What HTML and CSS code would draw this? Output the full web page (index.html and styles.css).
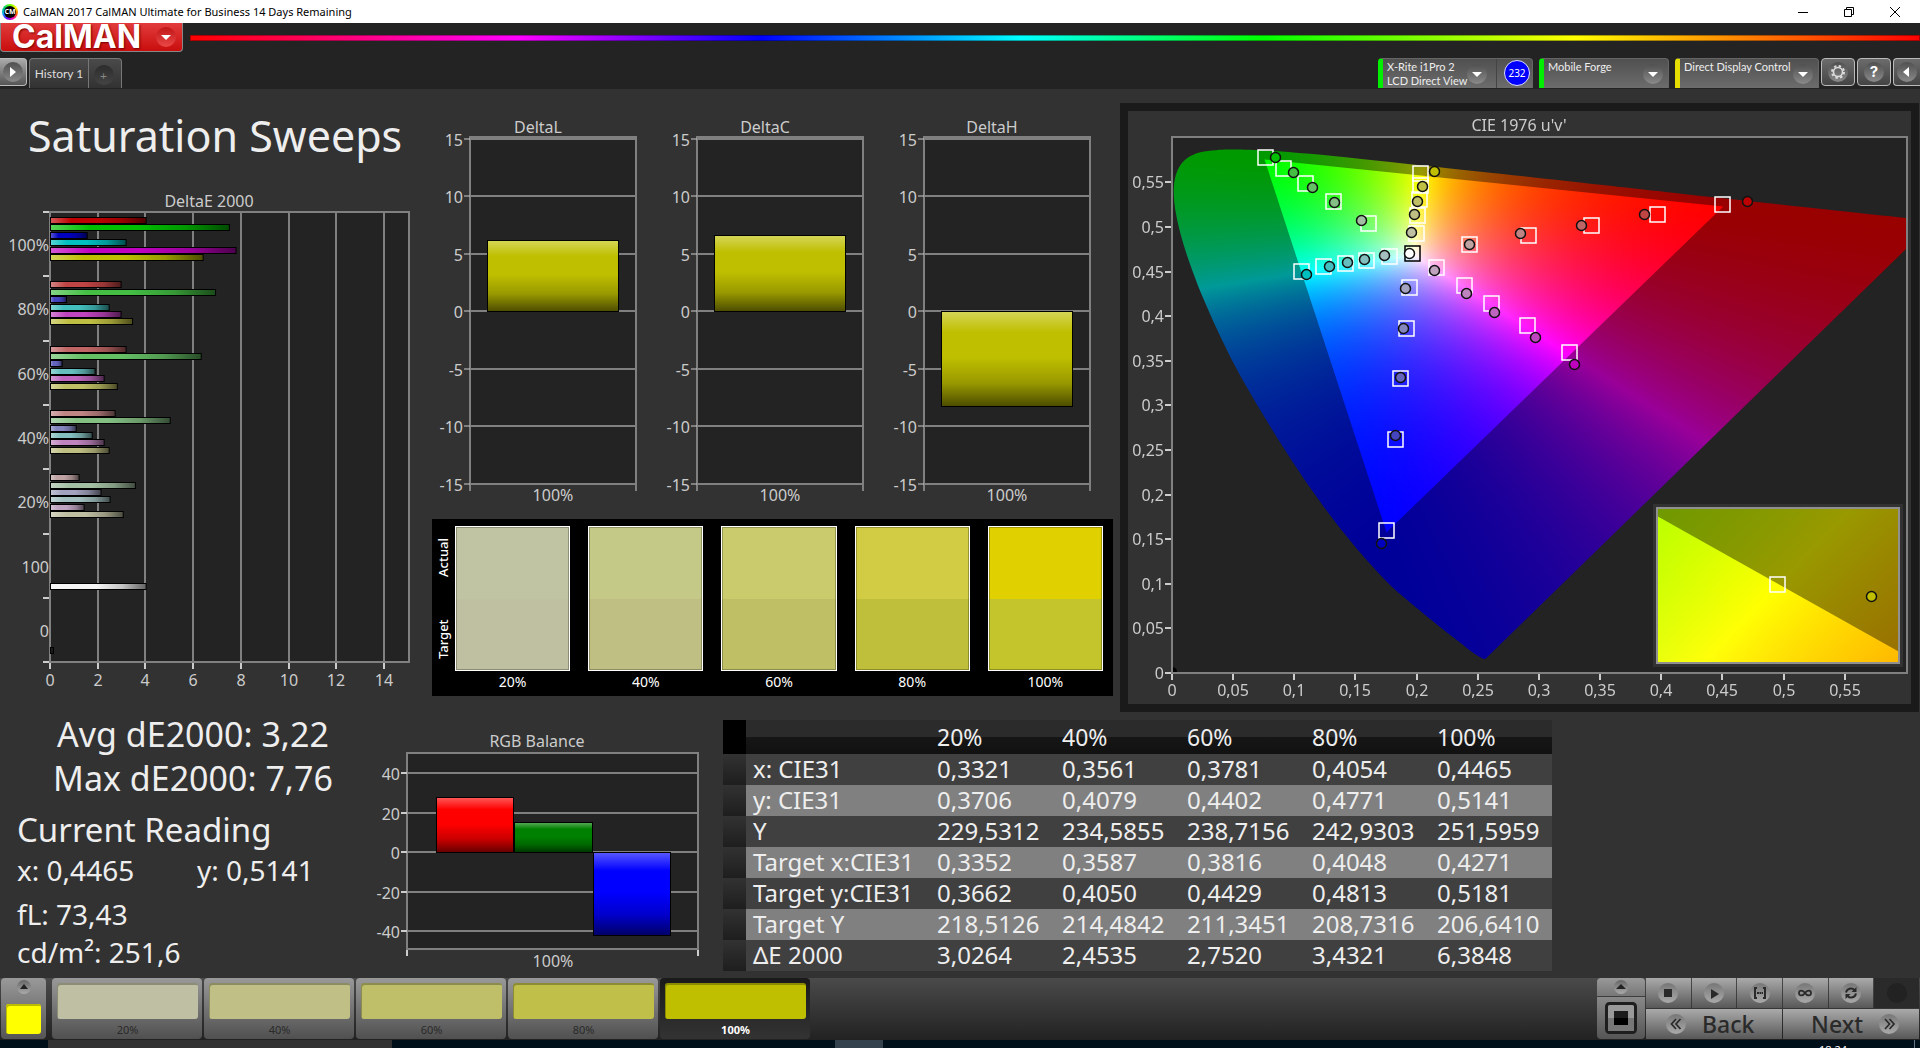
FILE: index.html
```html
<!DOCTYPE html>
<html lang="en">
<head>
<meta charset="utf-8">
<title>CalMAN 2017</title>
<link rel="stylesheet" href="styles.css">
</head>
<body>
<div class="titlebar">
  <span class="app-icon">CM</span>
  <span class="app-title">CalMAN 2017 CalMAN Ultimate for Business 14 Days Remaining</span>
  <div class="window-controls">
    <button aria-label="Minimize"><svg width="12" height="12" viewBox="0 0 12 12"><path d="M1 6.5H11" /></svg></button>
    <button aria-label="Restore"><svg width="12" height="12" viewBox="0 0 12 12"><path d="M1.5 3.5H8.500V10.500H1.500ZM3.500 3.500V1.500H10.500V8.500H8.500" /></svg></button>
    <button aria-label="Close"><svg width="12" height="12" viewBox="0 0 12 12"><path d="M1 1L11 11M11 1L1 11" /></svg></button>
  </div>
</div>

<header class="header">
  <div class="brand-row">
    <button class="logo">CalMAN<span class="knob knob-red"><svg width="20" height="20" viewBox="0 0 20 20"><path d="M5 8H15L10 13Z" fill="#fff"/></svg></span></button>
    <div class="rainbow"></div>
  </div>
  <div class="tab-row">
    <button class="square-button edge-left" aria-label="Open panel"><span class="knob"><svg width="20" height="20" viewBox="0 0 20 20"><path d="M7 5L13 10L7 15Z" fill="#fff"/></svg></span></button>
    <div class="tabs">
      <button class="tab">History 1</button>
      <button class="tab tab-add" aria-label="Add tab"><span class="knob knob-dark">+</span></button>
    </div>
    <div class="devices">
      <div class="device device-meter">
        <button class="device-name">X-Rite i1Pro 2<br>LCD Direct View<span class="knob"><svg width="20" height="20" viewBox="0 0 20 20"><path d="M5 8H15L10 13Z" fill="#fff"/></svg></span></button>
        <span class="badge">232</span>
      </div>
      <div class="device device-source">
        <button class="device-name">Mobile Forge<span class="knob"><svg width="20" height="20" viewBox="0 0 20 20"><path d="M5 8H15L10 13Z" fill="#fff"/></svg></span></button>
      </div>
      <div class="device device-display">
        <button class="device-name">Direct Display Control<span class="knob"><svg width="20" height="20" viewBox="0 0 20 20"><path d="M5 8H15L10 13Z" fill="#fff"/></svg></span></button>
      </div>
      <button class="square-button" aria-label="Settings"><span class="knob"><svg width="20" height="20" viewBox="0 0 20 20"><circle cx="10" cy="10" r="4.500" fill="none" stroke="#ddd" stroke-width="1.600"/><circle cx="10" cy="10" r="6" fill="none" stroke="#ddd" stroke-width="2" stroke-dasharray="2.400 2.312"/></svg></span></button>
      <button class="square-button" aria-label="Help"><span class="knob knob-help">?</span></button>
      <button class="square-button edge-right" aria-label="Collapse"><span class="knob"><svg width="20" height="20" viewBox="0 0 20 20"><path d="M12 5L6 10L12 15Z" fill="#fff"/></svg></span></button>
    </div>
  </div>
</header>

<main class="workspace">
  <section class="top">
    <div class="sweeps">
      <h1>Saturation Sweeps</h1>
      <svg id="delta-e" class="chart" viewBox="0 0 432 505" role="img" aria-label="DeltaE 2000"></svg>
    </div>
    <div class="middle">
      <div class="deltas">
        <svg id="delta-l" class="chart" viewBox="0 0 227 400" role="img" aria-label="DeltaL"></svg>
        <svg id="delta-c" class="chart" viewBox="0 0 227 400" role="img" aria-label="DeltaC"></svg>
        <svg id="delta-h" class="chart" viewBox="0 0 227 400" role="img" aria-label="DeltaH"></svg>
      </div>
      <div class="swatches">
        <div class="swatch-sides"><span>Actual</span><span>Target</span></div>
        <div class="swatch-list">
          <figure class="swatch s20"><div class="pair"><i></i><i></i></div><figcaption>20%</figcaption></figure>
          <figure class="swatch s40"><div class="pair"><i></i><i></i></div><figcaption>40%</figcaption></figure>
          <figure class="swatch s60"><div class="pair"><i></i><i></i></div><figcaption>60%</figcaption></figure>
          <figure class="swatch s80"><div class="pair"><i></i><i></i></div><figcaption>80%</figcaption></figure>
          <figure class="swatch s100"><div class="pair"><i></i><i></i></div><figcaption>100%</figcaption></figure>
        </div>
      </div>
    </div>
    <div class="cie">
      <canvas id="gamut" width="783" height="593"></canvas>
      <svg id="cie" class="chart" viewBox="0 0 783 593" role="img" aria-label="CIE 1976 u'v'"></svg>
    </div>
  </section>

  <section class="bottom">
    <div class="readings">
      <p class="summary">Avg dE2000: 3,22</p>
      <p class="summary">Max dE2000: 7,76</p>
      <h2>Current Reading</h2>
      <div class="xy"><span>x: 0,4465</span><span>y: 0,5141</span></div>
      <p class="fl">fL: 73,43</p>
      <p class="cd">cd/m²: 251,6</p>
    </div>
    <svg id="rgb" class="chart" viewBox="0 0 337 266" role="img" aria-label="RGB Balance"></svg>
    <table class="data">
      <colgroup><col class="c-head"><col class="c-label"><col class="c-val"><col class="c-val"><col class="c-val"><col class="c-val"><col class="c-last"></colgroup>
      <thead><tr><td></td><th></th><th>20%</th><th>40%</th><th>60%</th><th>80%</th><th>100%</th></tr></thead>
      <tbody>
        <tr><td></td><th>x: CIE31</th><td>0,3321</td><td>0,3561</td><td>0,3781</td><td>0,4054</td><td>0,4465</td></tr>
        <tr><td></td><th>y: CIE31</th><td>0,3706</td><td>0,4079</td><td>0,4402</td><td>0,4771</td><td>0,5141</td></tr>
        <tr><td></td><th>Y</th><td>229,5312</td><td>234,5855</td><td>238,7156</td><td>242,9303</td><td>251,5959</td></tr>
        <tr><td></td><th>Target x:CIE31</th><td>0,3352</td><td>0,3587</td><td>0,3816</td><td>0,4048</td><td>0,4271</td></tr>
        <tr><td></td><th>Target y:CIE31</th><td>0,3662</td><td>0,4050</td><td>0,4429</td><td>0,4813</td><td>0,5181</td></tr>
        <tr><td></td><th>Target Y</th><td>218,5126</td><td>214,4842</td><td>211,3451</td><td>208,7316</td><td>206,6410</td></tr>
        <tr><td></td><th>ΔE 2000</th><td>3,0264</td><td>2,4535</td><td>2,7520</td><td>3,4321</td><td>6,3848</td></tr>
      </tbody>
    </table>
  </section>
</main>

<footer class="controls">
  <button class="current" aria-label="Current colour"><span class="mini-knob"><svg width="14" height="14" viewBox="0 0 14 14"><path d="M3 9L7 4L11 9Z" fill="#222"/></svg></span><i></i></button>
  <div class="steps">
    <button class="step s20"><i></i>20%</button>
    <button class="step s40"><i></i>40%</button>
    <button class="step s60"><i></i>60%</button>
    <button class="step s80"><i></i>80%</button>
    <button class="step s100 active"><i></i>100%</button>
  </div>
  <div class="pattern">
    <button class="pattern-up" aria-label="More patterns"><span class="mini-knob"><svg width="14" height="14" viewBox="0 0 14 14"><path d="M2 9L7 4L12 9Z" fill="#222"/></svg></span></button>
    <button class="pattern-window" aria-label="Window pattern"><svg width="32" height="32" viewBox="0 0 32 32"><rect x="1.500" y="1.500" width="29" height="29" rx="3" fill="#999" stroke="#1e1e1e" stroke-width="3"/><rect x="3" y="16" width="26" height="13" fill="#777"/><rect x="9" y="9" width="14" height="14" fill="#000"/><rect x="9" y="9" width="14" height="7" fill="#1c1c1c"/></svg></button>
  </div>
  <div class="transport">
    <button aria-label="Stop"><span class="knob"><svg width="20" height="20" viewBox="0 0 20 20"><path d="M6 6H14V14H6Z" fill="#2a2a2a"/></svg></span></button>
    <button aria-label="Play"><span class="knob"><svg width="20" height="20" viewBox="0 0 20 20"><path d="M7 6L15 11L7 16Z" fill="#2a2a2a"/></svg></span></button>
    <button aria-label="Read series"><span class="knob"><svg width="20" height="20" viewBox="0 0 20 20"><path d="M7 5H5V15H7M13 5H15V15H13" fill="none" stroke="#2a2a2a" stroke-width="2"/><path d="M7 9H9V11H7ZM9.500 9H11V11H9.500ZM11.500 9H13V11H11.500Z" fill="#2a2a2a"/></svg></span></button>
    <button aria-label="Continuous"><span class="knob"><svg width="20" height="20" viewBox="0 0 20 20"><path d="M10 10C8 7 4 6.500 4 10S8 13 10 10S16 6.500 16 10S12 13 10 10Z" fill="none" stroke="#2a2a2a" stroke-width="1.800"/></svg></span></button>
    <button aria-label="Refresh"><span class="knob"><svg width="20" height="20" viewBox="0 0 20 20"><path d="M5 9.500A5 5 0 0 1 13.500 7M15 10.500A5 5 0 0 1 6.500 13" fill="none" stroke="#2a2a2a" stroke-width="2"/><path d="M15.500 4V9H10.500ZM4.500 16V11H9.500Z" fill="#2a2a2a"/></svg></span></button>
    <button class="off" aria-label="Idle"><span class="knob knob-dark"></span></button>
    <button class="wide back"><span class="knob"><svg width="20" height="20" viewBox="0 0 20 20"><path d="M10 5L5.500 10L10 15M14.500 5L10 10L14.500 15" fill="none" stroke="#2a2a2a" stroke-width="1.700"/></svg></span>Back</button>
    <button class="wide next">Next<span class="knob"><svg width="20" height="20" viewBox="0 0 20 20"><path d="M6 5L10.500 10L6 15M10.500 5L15 10L10.500 15" fill="none" stroke="#2a2a2a" stroke-width="1.700"/></svg></span></button>
  </div>
</footer>
<div class="taskbar"><div class="task task-a"></div><div class="task task-b"></div><span class="clock">18:24</span><div class="task-end"></div></div>
<script src="script.js"></script>
</body>
</html>
```
FILE: styles.css
```css
* { box-sizing: border-box; }
body {
  margin: 0;
  background: #323232;
  color: #eee;
  font-family: "Noto Sans", "Open Sans", sans-serif;
  font-size: 16px;
}
button {
  margin: 0;
  padding: 0;
  border: 0;
  background: none;
  color: inherit;
  font: inherit;
}
h1, h2, p, figure { margin: 0; font-weight: 400; }
svg { display: block; }
i { display: block; }

/* title bar */
.titlebar {
  display: flex;
  align-items: center;
  height: 23px;
  padding-left: 2px;
  background: #fff;
  color: #000;
  font-size: 11px;
}
.app-icon {
  width: 16px;
  height: 16px;
  margin-right: 5px;
  border: 2px solid transparent;
  border-radius: 50%;
  background: linear-gradient(#000, #000) padding-box,
    conic-gradient(#6f0, #ff0, #f60, #f0a, #60f, #0af, #0c6, #6f0) border-box;
  color: #fff;
  font-size: 7px;
  font-weight: 700;
  line-height: 12px;
  text-align: center;
}
.window-controls { display: flex; margin-left: auto; margin-right: 2px; }
.window-controls button {
  display: grid;
  place-items: center;
  width: 46px;
  height: 20px;
}
.window-controls path { fill: none; stroke: #000; }

/* header */
.header { height: 66px; background: #232323; }
.brand-row { display: flex; height: 29px; }
.logo {
  display: flex;
  align-items: center;
  justify-content: space-between;
  width: 183px;
  padding: 0 6px 0 11px;
  border: 1px solid #888;
  border-top: 0;
  border-radius: 0 0 4px 4px;
  background: linear-gradient(#e23c3c, #c90d0d);
  color: #fff;
  font: 700 32px/28px Inter, sans-serif;
  text-shadow: 1px 1px 2px #700;
}
.rainbow {
  flex: 1;
  height: 6px;
  margin: 12px 0 0 7px;
  background: linear-gradient(90deg, #f00, #f0f 19%, #00f 33%, #0ff 48%, #0f0 62%, #ff0 80%, #f00);
  box-shadow: inset 0 0 0 1px #0005;
}
.knob {
  display: grid;
  flex: none;
  place-items: center;
  width: 20px;
  height: 20px;
  border-radius: 50%;
  background: linear-gradient(#505050, #8a8a8a);
}
.knob-red { background: linear-gradient(#c01616, #ea4848); }
.knob-dark { background: linear-gradient(#2c2c2c, #444); color: #888; }
.knob-help { color: #fff; font: 700 15px/20px Inter, sans-serif; }
.tab-row {
  display: flex;
  align-items: flex-start;
  height: 30px;
  margin-top: 6px;
  font-family: Lato, "Noto Sans", sans-serif;
  font-size: 12px;
}
.square-button {
  display: grid;
  place-items: center;
  width: 34px;
  height: 28px;
  border: 1px solid #bbb;
  border-radius: 4px;
  background: linear-gradient(#6c6c6c, #444);
}
.edge-left { width: 27px; border-left: 0; border-radius: 0 4px 4px 0; background: linear-gradient(#aaa, #555); }
.edge-right { width: 27px; border-right: 0; border-radius: 4px 0 0 4px; }
.tabs {
  display: flex;
  height: 30px;
  margin-left: 2px;
  border: 1px solid #777;
  border-bottom: 0;
  border-radius: 4px 4px 0 0;
  background: linear-gradient(#4a4a4a, #323232);
  color: #ddd;
}
.tab { width: 58px; }
.tab-add {
  display: grid;
  place-items: center;
  width: 33px;
  padding: 3px 3px 0 0;
  border-left: 1px solid #777;
}
.devices { display: flex; gap: 2px; margin-left: auto; }
.device {
  display: flex;
  height: 30px;
  margin-right: 4px;
  border: 1px solid #666;
  border-bottom: 0;
  border-left: 5px solid #0e0;
  border-radius: 4px 4px 0 0;
  background: linear-gradient(#505050, #6c6c6c);
  color: #eee;
}
.device-name {
  display: flex;
  justify-content: space-between;
  width: 100%;
  padding: 1px 5px 0 4px;
  font-size: 11px;
  line-height: 14px;
  text-align: left;
  white-space: nowrap;
}
.device-name .knob { margin-top: 4px; }
.device-meter { width: 155px; }
.device-meter .device-name { width: 114px; padding-right: 9px; border-right: 1px solid #444; }
.device-source { width: 130px; }
.device-display { width: 144px; margin-right: 0; border-left-color: #e6de00; }
.badge {
  width: 26px;
  height: 26px;
  margin: 1px 2px 0 auto;
  border: 1px solid #ddf;
  border-radius: 50%;
  background: #00f;
  color: #fff;
  font: 10px/24px "Noto Sans", sans-serif;
  text-align: center;
}

/* workspace */
.workspace { padding-top: 14px; }
.top {
  display: grid;
  grid-template-columns: minmax(0, 425fr) minmax(0, 681fr) minmax(0, 799fr);
  column-gap: 7px;
  padding-right: 1px;
  align-items: start;
}
.sweeps { margin-right: -7px; }
h1 {
  height: 87px;
  padding: 5px 0 0 28px;
  font-size: 43px;
  line-height: 56px;
  white-space: nowrap;
}
.chart { width: 100%; height: auto; overflow: visible; }
.chart text { fill: #ccc; font-size: 16px; }
.deltas { display: grid; grid-template-columns: repeat(3, 1fr); }
.swatches {
  display: flex;
  height: 177px;
  margin-top: 16px;
  padding: 7px 10px 0 0;
  background: #000;
  color: #fff;
}
.swatch-sides {
  display: grid;
  grid-template-columns: 1fr 1fr;
  column-gap: 17px;
  width: 23px;
  height: 145px;
  writing-mode: vertical-rl;
  transform: rotate(180deg);
  font-size: 13px;
  font-weight: 500;
  line-height: 23px;
  text-align: center;
}
.swatch-sides span:first-child { order: 2; }
.swatch-list { display: grid; flex: 1; grid-template-columns: repeat(5, 1fr); column-gap: 18px; }
.swatch { text-align: center; font-size: 14px; line-height: 22px; }
.pair { height: 145px; border: 1px solid #fff; outline: 1px solid #0004; outline-offset: -2px; }
.pair i { height: 50%; }
.s20 .pair i { background: #c0c4a3; } .s20 .pair i + i { background: #bfbfa2; }
.s40 .pair i { background: #c5c988; } .s40 .pair i + i { background: #bfbf84; }
.s60 .pair i { background: #cacb6d; } .s60 .pair i + i { background: #bfbf65; }
.s80 .pair i { background: #d1cc43; } .s80 .pair i + i { background: #bfbf3b; }
.s100 .pair i { background: #e0d000; } .s100 .pair i + i { background: #c4c42d; }
.cie { display: grid; border: 8px solid #1a1a1a; }
.cie > * { grid-area: 1 / 1; width: 100%; min-width: 0; }

/* readings, balance and data */
.bottom {
  display: grid;
  grid-template-columns: minmax(0, 386fr) minmax(0, 337fr) minmax(0, 829fr) minmax(0, 368fr);
  align-items: start;
}
.readings { height: 266px; padding-left: 17px; font-size: 28px; line-height: 40px; white-space: nowrap; }
.summary { margin-left: -17px; font-size: 34px; line-height: 44px; text-align: center; }
h2 { margin-top: 10px; font-size: 33px; line-height: 40px; }
.xy { display: grid; grid-template-columns: 180px 1fr; }
.fl { margin-top: 4px; }
.cd { line-height: 36px; }
.data {
  width: 100%;
  margin-top: 8px;
  border-collapse: collapse;
  table-layout: fixed;
  font-size: 24px;
  line-height: 28px;
  white-space: nowrap;
}
.c-head { width: 23px; }
.c-label { width: 184px; }
.c-val { width: 125px; }
.c-last { width: 122px; }
.data td, .data th { height: 31px; padding: 0 0 2px 7px; font-weight: 400; text-align: left; }
.data thead tr { background: linear-gradient(#2b2b2b 50%, #161616 50%, #111); }
.data thead td, .data thead th { height: 34px; padding-bottom: 0; font-size: 23px; }
.data thead td { background: #000; }
.data tbody tr { background: #404040; }
.data tbody tr:nth-child(even) { background: #808080; }
.data tbody td:first-child { background: linear-gradient(#323232, #1e1e1e); }

/* footer controls */
.controls {
  display: flex;
  height: 62px;
  padding: 0 1px 1px;
  background: linear-gradient(#4a4a4a, #222);
  color: #2a2a2a;
}
.current {
  display: flex;
  flex-direction: column;
  align-items: center;
  justify-content: space-between;
  width: 45px;
  padding: 2px 0 5px;
  border-radius: 4px;
  background: linear-gradient(#999, #555);
}
.mini-knob {
  width: 14px;
  height: 14px;
  border-radius: 50%;
  background: linear-gradient(#666, #aaa);
}
.current i { width: 35px; height: 30px; border-radius: 3px; background: #ff0; box-shadow: inset 1px 2px 0 #bb0; }
.steps { display: flex; gap: 2px; margin-left: 6px; }
.step {
  width: 150px;
  padding: 5px 4px 0 5px;
  border-radius: 4px;
  background: linear-gradient(#999, #505050);
  font-size: 11px;
  line-height: 20px;
}
.step i { height: 36px; margin-bottom: 1px; border-radius: 3px; box-shadow: inset 1px 2px 0 #0004; }
.step.s20 i { background: #bfbfa3; }
.step.s40 i { background: #bfbf86; }
.step.s60 i { background: #bfbf69; }
.step.s80 i { background: #bfbf49; }
.step.s100 i { background: #bfbf00; }
.step.active { background: linear-gradient(#1a1a1a, #333); color: #fff; font-weight: 700; }
.pattern { display: grid; grid-template-rows: 18px 42px; gap: 1px; width: 48px; margin-left: auto; }
.pattern button { display: grid; place-items: center; background: linear-gradient(#999, #777); border-radius: 4px 4px 0 0; }
.pattern .pattern-window { background: linear-gradient(#888, #555); border-radius: 0 0 4px 4px; }
.transport {
  display: grid;
  grid-template-columns: repeat(6, 1fr);
  grid-template-rows: 30px 30px;
  gap: 1px;
  width: 273px;
  margin-left: 1px;
}
.transport button { display: grid; place-items: center; background: linear-gradient(#aaa, #585858); }
.transport .knob { background: linear-gradient(#777, #aaa); }
.transport .off { background: #2a2a2a; }
.transport .off .knob { background: #222; }
.transport .wide {
  display: flex;
  grid-column: span 3;
  align-items: center;
  gap: 16px;
  padding: 0 20px;
  font-size: 23px;
  font-weight: 500;
  line-height: 30px;
}
.transport .next { justify-content: flex-end; }

/* operating system task bar */
.taskbar { display: flex; height: 8px; overflow: hidden; background: #00101a; }
.task { height: 8px; }
.task-a { width: 344px; margin-left: 48px; background: #323232; }
.task-b { width: 48px; margin-left: 443px; background: #33424d; }
.clock { margin-left: auto; margin-right: 67px; color: #fff; font-size: 11px; line-height: 20px; }
.task-end { width: 6px; border-left: 1px solid #678; }
```
FILE: script.js
```js
const NS = 'http://www.w3.org/2000/svg';
const SHADES = { 20: 163, 40: 132, 60: 101, 80: 68, 100: 0 };
const HUES = { red: [1, 0, 0], green: [0, 1, 0], blue: [0, 0, 1], cyan: [0, 1, 1], magenta: [1, 0, 1], yellow: [1, 1, 0] };

function add(parent, name, attrs, text) {
  const el = document.createElementNS(NS, name);
  for (const key in attrs) el.setAttribute(key, attrs[key]);
  if (text !== undefined) el.textContent = text;
  parent.appendChild(el);
  return el;
}

function tint(hue, level) {
  return HUES[hue].map(on => (on ? 191 : SHADES[level]));
}

function css(rgb) {
  return `rgb(${rgb.map(Math.round).join(',')})`;
}

let gradientCount = 0;
function gloss(svg, rgb, horizontal) {
  const id = 'gloss' + gradientCount++;
  const end = horizontal ? { x2: 1, y2: 0 } : { x2: 0, y2: 1 };
  const g = add(svg, 'linearGradient', { id, x1: 0, y1: 0, ...end });
  const light = rgb.map(c => c + (255 - c) * 0.35);
  const stops = [[0, light], [0.22, rgb], [0.48, rgb], [0.75, rgb.map(c => c * 0.8)], [1, rgb.map(c => c * 0.4)]];
  for (const [offset, color] of stops) add(g, 'stop', { offset, 'stop-color': css(color) });
  return `url(#${id})`;
}

function bar(svg, x, y, width, height, rgb, horizontal) {
  add(svg, 'rect', { x, y, width, height, fill: gloss(svg, rgb, horizontal), stroke: '#000' });
}

function line(svg, x1, y1, x2, y2, stroke = '#808080', width = 2) {
  add(svg, 'line', { x1, y1, x2, y2, stroke, 'stroke-width': width });
}

function label(svg, x, y, text, anchor = 'middle') {
  add(svg, 'text', { x, y: y + 6, 'text-anchor': anchor }, text);
}

function frame(svg, x, y, width, height, fill = '#232323') {
  add(svg, 'rect', { x, y, width, height, fill, stroke: '#808080', 'stroke-width': 2 });
}

/* DeltaE 2000 */
{
  const svg = document.getElementById('delta-e');
  const left = 50, top = 22, unit = 23.85, row = 64.3;
  label(svg, 209, 11, 'DeltaE 2000');
  frame(svg, left, top, 359, 450);
  for (let v = 0; v <= 14; v += 2) {
    const x = Math.round(left + v * unit);
    if (v) line(svg, x, top, x, top + 450);
    line(svg, x, top + 451, x, top + 457, '#ccc');
    label(svg, x, 490, v);
  }
  const rows = [
    ['100%', [4.01, 7.5, 1.54, 3.17, 7.78, 6.4]],
    ['80%', [2.96, 6.92, 0.67, 2.46, 2.96, 3.44]],
    ['60%', [3.17, 6.32, 0.49, 1.87, 2.25, 2.8]],
    ['40%', [2.71, 5.02, 1.08, 1.75, 2.25, 2.46]],
    ['20%', [1.2, 3.56, 2.12, 2.5, 1.41, 3.05]],
    ['100', []],
    ['0', []],
  ];
  const slot = (r, i) => Math.round(top + r * row + 6 + i * 7.4) - 0.5;
  rows.forEach(([name, values], r) => {
    const y = Math.round(top + r * row);
    line(svg, 43, y, 49, y, '#ccc');
    label(svg, 49, y + 33, name, 'end');
    values.forEach((v, i) => bar(svg, left + 0.5, slot(r, i), v * unit, 6, tint(Object.keys(HUES)[i], parseInt(name)), true));
  });
  line(svg, 43, 472, 49, 472, '#ccc');
  bar(svg, left + 0.5, slot(5, 6), 4.01 * unit, 6, [245, 245, 245], true);
  bar(svg, left + 0.5, slot(6, 6), 3, 6, [30, 30, 30], true);
}

/* DeltaL, DeltaC, DeltaH */
for (const [id, title, value] of [['delta-l', 'DeltaL', 6.2], ['delta-c', 'DeltaC', 6.6], ['delta-h', 'DeltaH', -8.3]]) {
  const svg = document.getElementById(id);
  const zero = 208, unit = 11.5;
  label(svg, 106, 24, title);
  frame(svg, 38, 34, 166, 347);
  for (let v = 15; v >= -15; v -= 5) {
    const y = Math.round(zero - v * unit);
    line(svg, 38, y, 204, y);
    line(svg, 32, y, 38, y, '#ccc', 1);
    label(svg, 31, y + 1, v, 'end');
  }
  line(svg, 38, 382, 38, 388, '#ccc', 1);
  line(svg, 204, 382, 204, 388, '#ccc', 1);
  label(svg, 121, 392, '100%');
  bar(svg, 55.5, Math.round(zero - Math.max(value, 0) * unit) + 0.5, 131, Math.round(Math.abs(value) * unit), [191, 191, 0], false);
}

/* RGB balance */
{
  const svg = document.getElementById('rgb');
  label(svg, 151, 29, 'RGB Balance');
  frame(svg, 21, 41, 291, 196);
  for (const [v, y] of [[40, 61], [20, 101], [0, 140], [-20, 180], [-40, 219]]) {
    line(svg, 21, y, 312, y);
    line(svg, 15, y, 21, y, '#ccc');
    label(svg, 14, y + 1, v, 'end');
  }
  line(svg, 21, 238, 21, 244, '#ccc');
  line(svg, 312, 238, 312, 244, '#ccc');
  label(svg, 167, 249, '100%');
  bar(svg, 50.5, 85.5, 77, 55, [255, 0, 0], false);
  bar(svg, 128.5, 110.5, 78, 30, [0, 128, 0], false);
  bar(svg, 207.5, 140.5, 77, 83, [0, 0, 255], false);
}

/* CIE 1976 chromaticity diagram */
const PLOT = { x: 44, y: 26, width: 735, height: 536, u: 1223, v: 892 };
const INSET = { x: 529, y: 397, width: 242, height: 155 };
const LOCUS = [
  [.1741, .005], [.1726, .0048], [.1689, .0069], [.1644, .0109], [.1566, .0177], [.144, .0297], [.1355, .0399],
  [.1241, .0578], [.1096, .0868], [.0913, .1327], [.0687, .2007], [.0454, .295], [.0235, .4127], [.0082, .5384],
  [.0039, .6548], [.0139, .7502], [.0389, .812], [.0743, .8338], [.1142, .8262], [.1547, .8059], [.2296, .7543],
  [.3016, .6923], [.3731, .6245], [.4441, .5547], [.5125, .4866], [.5752, .4242], [.627, .3725], [.6915, .3083],
  [.719, .2809], [.7347, .2653],
];
const PRIMARIES = [[.64, .33], [.21, .71], [.15, .06]];

function toPlot([x, y]) {
  const d = -2 * x + 12 * y + 3;
  return [PLOT.x + 4 * x / d * PLOT.u, PLOT.y + PLOT.height - 9 * y / d * PLOT.v];
}

function xyColor(x, y) {
  const X = x / y, Z = (1 - x - y) / y;
  const linear = [
    2.041369 * X - 0.5649464 - 0.3446944 * Z,
    -0.969266 * X + 1.8760108 + 0.041556 * Z,
    0.0134474 * X - 0.1183897 + 1.0154096 * Z,
  ].map(c => Math.max(c, 0));
  const peak = Math.max(...linear);
  return linear.map(c => 255 * Math.pow(c / peak, 1.3));
}

function shade(width, height, toXY, level) {
  const layer = document.createElement('canvas');
  layer.width = width;
  layer.height = height;
  const ctx = layer.getContext('2d');
  const image = ctx.createImageData(width, height);
  for (let j = 0, k = 0; j < height; j++) {
    for (let i = 0; i < width; i++, k += 4) {
      const [x, y] = toXY(i, j);
      const rgb = xyColor(x, y);
      for (let c = 0; c < 3; c++) image.data[k + c] = rgb[c] * level;
      image.data[k + 3] = 255;
    }
  }
  ctx.putImageData(image, 0, 0);
  return layer;
}

function polygon(ctx, points) {
  ctx.beginPath();
  points.forEach((p, i) => (i ? ctx.lineTo(...p) : ctx.moveTo(...p)));
  ctx.closePath();
}

function smooth(ctx, points) {
  const at = i => points[Math.min(Math.max(i, 0), points.length - 1)];
  ctx.beginPath();
  ctx.moveTo(...points[0]);
  for (let i = 0; i < points.length - 1; i++) {
    const [p, a, b, n] = [at(i - 1), at(i), at(i + 1), at(i + 2)];
    ctx.bezierCurveTo(
      a[0] + (b[0] - p[0]) / 6, a[1] + (b[1] - p[1]) / 6,
      b[0] - (n[0] - a[0]) / 6, b[1] - (n[1] - a[1]) / 6,
      b[0], b[1]);
  }
  ctx.closePath();
}

function clipped(ctx, trace, draw) {
  ctx.save();
  trace();
  ctx.clip();
  draw();
  ctx.restore();
}

{
  const ctx = document.getElementById('gamut').getContext('2d');
  ctx.fillStyle = '#232323';
  ctx.fillRect(PLOT.x, PLOT.y, PLOT.width, PLOT.height);
  const fromPlot = (i, j) => {
    const u = (i + 0.5) / PLOT.u, v = Math.max((PLOT.height - j - 0.5) / PLOT.v, 0.001);
    const d = 6 * u - 16 * v + 12;
    return [9 * u / d, 4 * v / d];
  };
  const dim = shade(PLOT.width, PLOT.height, fromPlot, 0.6);
  const bright = shade(PLOT.width, PLOT.height, fromPlot, 1);
  clipped(ctx, () => { ctx.beginPath(); ctx.rect(PLOT.x, PLOT.y, PLOT.width, PLOT.height); }, () => {
    clipped(ctx, () => smooth(ctx, LOCUS.map(toPlot)), () => ctx.drawImage(dim, PLOT.x, PLOT.y));
    clipped(ctx, () => polygon(ctx, PRIMARIES.map(toPlot)), () => ctx.drawImage(bright, PLOT.x, PLOT.y));
  });

  ctx.fillStyle = '#323232';
  ctx.fillRect(INSET.x - 4, INSET.y - 4, INSET.width + 8, INSET.height + 8);
  const fromInset = (i, j) => [.4271 + (i - 121) / 4810, .5181 - (j - 76) / 3050];
  const toInset = ([x, y]) => [INSET.x + 121 + (x - .4271) * 4810, INSET.y + 76 - (y - .5181) * 3050];
  ctx.drawImage(shade(INSET.width, INSET.height, fromInset, 0.6), INSET.x, INSET.y);
  clipped(ctx, () => { ctx.beginPath(); ctx.rect(INSET.x, INSET.y, INSET.width, INSET.height); }, () => {
    clipped(ctx, () => polygon(ctx, PRIMARIES.map(toInset)), () =>
      ctx.drawImage(shade(INSET.width, INSET.height, fromInset, 1), INSET.x, INSET.y));
  });
}

{
  const svg = document.getElementById('cie');
  label(svg, 391, 14, "CIE 1976 u'v'");
  frame(svg, PLOT.x, PLOT.y, PLOT.width, PLOT.height, 'none');
  const name = n => (n === 0 ? '0' : String(n / 100).replace('.', ','));
  for (let n = 0; n <= 55; n += 5) {
    const x = Math.round(PLOT.x + n / 100 * PLOT.u);
    const y = Math.round(PLOT.y + PLOT.height - n / 100 * PLOT.v);
    line(svg, x, 563, x, 569, '#ccc');
    line(svg, 37, y, 43, y, '#ccc');
    label(svg, x, 579, name(n));
    label(svg, 36, y, name(n), 'end');
  }
  const square = (x, y, stroke = '#fff') =>
    add(svg, 'rect', { x: x - 7, y: y - 8, width: 15, height: 15, fill: 'none', stroke, 'stroke-width': 1.5 });
  const dot = (x, y, fill) =>
    add(svg, 'circle', { cx: x + 0.5, cy: y - 0.5, r: 5, fill, stroke: '#111', 'stroke-width': 1.5 });

  const targets = [
    [137, 47], [155, 58], [177, 73], [205, 91], [240, 113],
    [292, 63], [292, 75], [291, 89], [289, 105], [288, 123],
    [173, 161], [195, 156], [217, 153], [238, 150], [261, 146],
    [281, 177], [278, 218], [272, 268], [267, 329], [258, 420],
    [341, 134], [400, 125], [463, 115], [529, 104], [594, 94],
    [308, 157], [336, 175], [363, 193], [399, 215], [441, 242],
  ];
  targets.forEach(([x, y]) => square(x, y));
  const readings = {
    green: [[233, 110], [206, 92], [184, 77], [165, 62], [147, 47]],
    yellow: [[283, 122], [286, 104], [289, 91], [294, 76], [306, 61]],
    cyan: [[256, 145], [236, 149], [219, 152], [201, 156], [178, 164]],
    blue: [[277, 178], [275, 218], [272, 267], [267, 325], [253, 433]],
    red: [[341, 134], [392, 123], [453, 115], [516, 104], [619, 91]],
    magenta: [[306, 160], [338, 183], [366, 202], [407, 227], [446, 254]],
  };
  for (const hue in readings) {
    readings[hue].forEach(([x, y], i) => dot(x, y, css(tint(hue, (i + 1) * 20))));
  }
  square(284, 143, '#000');
  dot(281, 143, '#fff');
  add(svg, 'path', { d: 'M45 556Q49 557 49 561H45Z', fill: '#000' });
  add(svg, 'rect', { x: INSET.x, y: INSET.y, width: INSET.width, height: INSET.height, fill: 'none', stroke: '#909090', 'stroke-width': 2 });
  square(INSET.x + 120, INSET.y + 77);
  dot(743, 486, '#bfbf00');
}
```
